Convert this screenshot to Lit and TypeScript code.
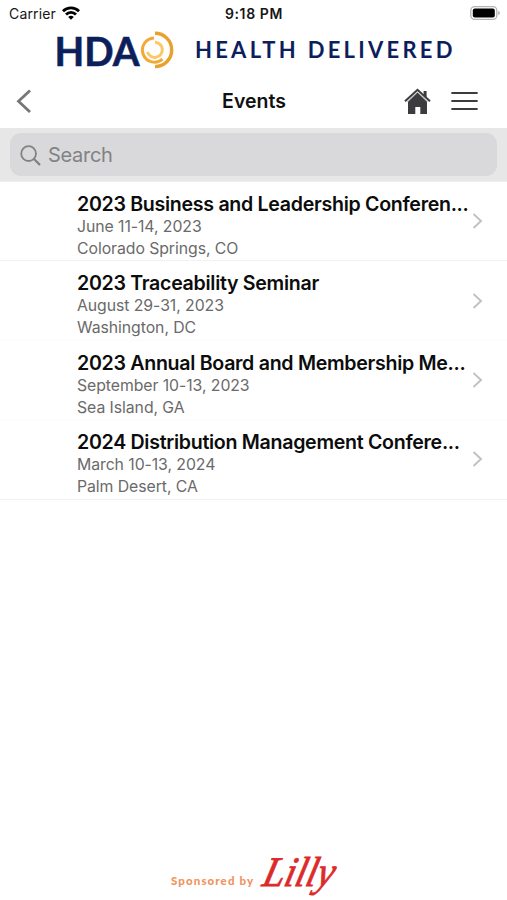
import { LitElement, html, css } from "lit";
import { customElement, property } from "lit/decorators.js";

@customElement("status-bar")
class StatusBar extends LitElement {
  static styles = css`
    :host { display: grid; grid-template-columns: 1fr auto 1fr; align-items: center; height: 26px; padding: 0 7px 0 9px; box-sizing: border-box; color: #161616; }
    .carrier { display: flex; align-items: center; gap: 6px; font-size: 14px; letter-spacing: 0.15px; }
    .time { font-size: 14px; font-weight: 600; letter-spacing: 0.6px; padding: 1px 1px 0 0; }
    .battery { justify-self: end; display: block; }
    .wifi { display: block; }
  `;
  render() {
    return html`
      <div class="carrier">
        <span>Carrier</span>
        <svg class="wifi" width="18" height="14" viewBox="0 0 18 14" fill="none" stroke="#000" stroke-width="2.8">
          <path d="M1 5.2C5.4.8 12.6.8 17 5.2" />
          <path d="M4 8.5C6.8 5.7 11.2 5.7 14 8.5" />
          <path d="M9 13.7L6.2 10.9Q9 8.7 11.8 10.9Z" fill="#000" stroke="none" />
        </svg>
      </div>
      <div class="time">9:18 PM</div>
      <svg class="battery" width="30" height="14" viewBox="0 0 30 14">
        <rect x=".8" y=".7" width="26" height="12.6" rx="3.8" fill="#fff" stroke="#b4b4b4" stroke-width="1.3" />
        <rect x="2.8" y="2.5" width="22" height="9" rx="2" fill="#000" />
        <path d="M28.2 4.8Q30 5.6 30 7T28.2 9.2Z" fill="#b4b4b4" />
      </svg>`;
  }
}

@customElement("brand-banner")
class BrandBanner extends LitElement {
  static styles = css`
    :host { display: block; height: 48px; }
    .banner { display: block; overflow: visible; }
    .mark { font: 700 41px Lato, sans-serif; }
    .tagline { font: 700 22px Lato, sans-serif; }
  `;
  render() {
    return html`
      <svg class="banner" width="507" height="48" viewBox="0 26 507 48">
        <text class="mark" x="54.5" y="66" textLength="85" lengthAdjust="spacingAndGlyphs" fill="#0c1f5c" stroke="#0c1f5c" stroke-width=".6">HDA</text>
        <g fill="none">
          <path d="M155 33.2A16.7 16.7 0 0 1 155 66.6" stroke="#e9a02c" stroke-width="3.4" />
          <path d="M154 38A12.1 12.1 0 1 0 162.5 59.2" stroke="#f3a936" stroke-width="3" />
          <path d="M155 42.2A7.6 7.6 0 1 1 147.5 52" stroke="#fbc967" stroke-width="3" />
        </g>
        <text class="tagline" x="195" y="58.4" textLength="257.5" fill="#0c1f5c">HEALTH DELIVERED</text>
      </svg>`;
  }
}

@customElement("nav-header")
class NavHeader extends LitElement {
  static styles = css`
    :host { display: grid; grid-template-columns: 1fr auto 1fr; align-items: center; height: 54px; padding: 0 29px 0 16px; box-sizing: border-box; }
    .title { font-size: 19.5px; font-weight: 600; color: #111; padding-left: 14px; }
    .actions { display: flex; justify-content: flex-end; align-items: center; gap: 20px; }
    .icon { display: block; }
  `;
  render() {
    return html`
      <svg class="icon" width="16" height="24" viewBox="0 0 16 24" fill="none" stroke="#777" stroke-width="2.8">
        <path d="M14 1.5L2.5 12.3L14 23" />
      </svg>
      <div class="title">Events</div>
      <div class="actions">
        <svg class="icon" width="27" height="28" viewBox="0 0 27 28">
          <path d="M4 14.8L13.5 5.5L23 14.8V27H16.3V20H11.3V27H4Z" fill="#3c3c3e" />
          <path d="M1 14.3L13.5 2.8L26 14.3" fill="none" stroke="#3c3c3e" stroke-width="2" />
          <path d="M3 14.7L13.5 5.1L24 14.7" fill="none" stroke="#888" stroke-width=".5" />
          <path d="M19.6 4H22.6V10.8L19.6 8.2Z" fill="#3c3c3e" />
        </svg>
        <svg class="icon" width="27" height="20" viewBox="0 0 27 20" stroke="#3c3c3e" stroke-width="2.2" stroke-linecap="round">
          <path d="M1.2 2H25.8M1.2 10H25.8M1.2 18H25.8" />
        </svg>
      </div>`;
  }
}

@customElement("search-field")
class SearchField extends LitElement {
  static styles = css`
    :host { display: block; height: 54px; padding: 5px 10px; box-sizing: border-box; background: #e7e7e7; border-bottom: 1px solid #eee; }
    .field { display: flex; align-items: center; gap: 7px; height: 43px; padding: 1px 0 0 10px; box-sizing: border-box; border-radius: 11px; background: #d9d9db; color: #828285; font-size: 20px; letter-spacing: -0.3px; }
    .glass { display: block; }
  `;
  render() {
    return html`
      <div class="field">
        <svg class="glass" width="21" height="21" viewBox="0 0 21 21" fill="none" stroke="#828285" stroke-width="1.8" stroke-linecap="round">
          <circle cx="8.6" cy="8.6" r="7.4" />
          <path d="M14 14L19.4 19.4" stroke-width="2.2" />
        </svg>
        <span>Search</span>
      </div>`;
  }
}

@customElement("event-row")
class EventRow extends LitElement {
  @property() name = "";
  @property() dates = "";
  @property() place = "";
  static styles = css`
    :host { display: flex; align-items: center; height: 79.4px; padding: 0 24px 0 77px; box-sizing: border-box; border-bottom: 1px solid #f1f1f1; }
    .text { flex: 1; min-width: 0; white-space: nowrap; padding-top: 9.2px; }
    .name { font-size: 19.6px; font-weight: 600; line-height: 24px; color: #0c0c0c; letter-spacing: -0.3px; }
    .detail { font-size: 15.8px; line-height: 22px; color: #6a6a6a; letter-spacing: -0.06px; }
    .chevron { display: block; flex: none; }
  `;
  render() {
    return html`
      <div class="text">
        <div class="name">${this.name}</div>
        <div class="detail">${this.dates}</div>
        <div class="detail">${this.place}</div>
      </div>
      <svg class="chevron" width="11" height="16" viewBox="0 0 11 16" fill="none" stroke="#c2c2c4" stroke-width="2">
        <path d="M1.5 1L9 8L1.5 15" />
      </svg>`;
  }
}

@customElement("sponsor-footer")
class SponsorFooter extends LitElement {
  static styles = css`
    :host { display: block; height: 52px; }
    .sponsor { display: block; }
    .by { font: 900 11.5px Lato, sans-serif; }
    .name { font: italic 400 42px "Liberation Serif", serif; }
  `;
  render() {
    return html`
      <svg class="sponsor" width="507" height="52" viewBox="0 848 507 52">
        <text class="by" x="171" y="884.5" textLength="82" fill="#ee9560">Sponsored by</text>
        <text class="name" transform="translate(261 886) skewX(-14)" textLength="71" lengthAdjust="spacingAndGlyphs" fill="#dc2a2b" stroke="#dc2a2b" stroke-width=".8">Lilly</text>
      </svg>`;
  }
}

const EVENTS = [
  { name: "2023 Business and Leadership Conferen...", dates: "June 11-14, 2023", place: "Colorado Springs, CO" },
  { name: "2023 Traceability Seminar", dates: "August 29-31, 2023", place: "Washington, DC" },
  { name: "2023 Annual Board and Membership Me...", dates: "September 10-13, 2023", place: "Sea Island, GA" },
  { name: "2024 Distribution Management Confere...", dates: "March 10-13, 2024", place: "Palm Desert, CA" },
];

@customElement("app-root")
class AppRoot extends LitElement {
  static styles = css`
    :host { display: flex; flex-direction: column; height: 900px; background: #fff; font-family: Inter, "Liberation Sans", sans-serif; overflow: hidden; }
    .list { flex: 1; }
    .soft { border-bottom-color: #fcfcfc; }
  `;
  render() {
    return html`
      <status-bar></status-bar>
      <brand-banner></brand-banner>
      <nav-header></nav-header>
      <search-field></search-field>
      <div class="list">
        ${EVENTS.map((e, i) => html`<event-row class=${i === 1 || i === 2 ? "soft" : ""} .name=${e.name} .dates=${e.dates} .place=${e.place}></event-row>`)}
      </div>
      <sponsor-footer></sponsor-footer>`;
  }
}
